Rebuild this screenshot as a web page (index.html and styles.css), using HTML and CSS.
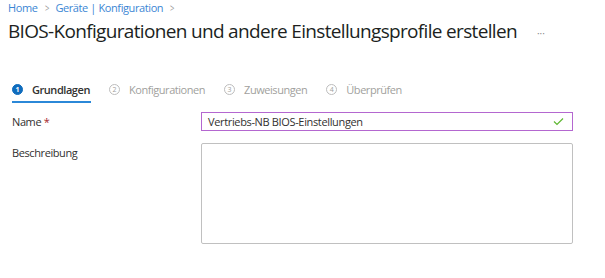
FILE: index.html
```html
<!DOCTYPE html>
<html lang="de">
<head>
<meta charset="utf-8">
<link rel="stylesheet" href="styles.css">
</head>
<body>
<div class="page">
  <nav class="crumbs">
    <a class="crumb">Home</a>
    <span class="sep">&gt;</span>
    <a class="crumb">Geräte | Konfiguration</a>
    <span class="sep">&gt;</span>
  </nav>
  <header class="head">
    <h1 class="title">BIOS-Konfigurationen und andere Einstellungsprofile erstellen</h1>
    <span class="more">···</span>
  </header>
  <ol class="steps">
    <li class="step active"><span class="num">1</span><span class="label">Grundlagen</span></li>
    <li class="step"><span class="num">2</span><span class="label">Konfigurationen</span></li>
    <li class="step"><span class="num">3</span><span class="label">Zuweisungen</span></li>
    <li class="step"><span class="num">4</span><span class="label">Überprüfen</span></li>
  </ol>
  <form class="form">
    <div class="row">
      <label class="lbl">Name <span class="req">*</span></label>
      <div class="field">
        <span class="value">Vertriebs-NB BIOS-Einstellungen</span>
        <svg class="check" width="11" height="9" viewBox="0 0 11 9"><path d="M1 4.5 L4 7.5 L10 1.5" fill="none" stroke="#5fb832" stroke-width="1.2"/></svg>
      </div>
    </div>
    <div class="row">
      <label class="lbl">Beschreibung</label>
      <div class="area"></div>
    </div>
  </form>
</div>
</body>
</html>
```
FILE: styles.css
```css
* { box-sizing: border-box; }
html, body { margin: 0; padding: 0; background: #fff; }
body { font-family: "Open Sans", "Noto Sans", sans-serif; color: #323130; }
.page { padding: 0 0 0 8px; }
.crumbs { display: flex; align-items: center; gap: 6px; height: 14px; font-size: 11px; letter-spacing: -0.4px; color: #3b86d4; }
.crumb { color: #3b86d4; }
.sep { color: #9a9a9a; font-size: 11px; transform: scaleX(0.7); }
.head { display: flex; align-items: center; margin-top: 5px; height: 24px; }
.title { margin: 0; font-size: 19px; font-weight: 400; color: #201f1e; letter-spacing: -0.67px; }
.more { margin-left: 20px; color: #8a8a8a; font-size: 10px; letter-spacing: 0; padding-top: 4px; }
.steps { list-style: none; margin: 36px 0 0 4px; padding: 0; display: flex; gap: 19px; font-size: 11px; letter-spacing: -0.45px; color: #a19f9d; }
.step { display: flex; align-items: center; gap: 9px; height: 20px; position: relative; }
.num { width: 11px; height: 11px; border: 1px solid #bdbdbd; border-radius: 50%; font-size: 7px; letter-spacing: 0; display: flex; align-items: center; justify-content: center; color: #a19f9d; }
.step.active { color: #323130; font-weight: 600; }
.step.active .num { background: #0f6cbd; border-color: #0f6cbd; color: #fff; font-weight: 700; }
.step.active::after { content: ""; position: absolute; left: 0; right: -1px; bottom: -4px; height: 2px; background: #2b88d8; }
.form { margin-top: 13px; display: flex; flex-direction: column; gap: 12px; padding-left: 4px; }
.row { display: flex; align-items: flex-start; }
.lbl { width: 189px; font-size: 11px; letter-spacing: -0.4px; color: #323130; padding-top: 2px; }
.req { color: #a4262c; }
.field { width: 372px; height: 19px; border: 1px solid #b467d0; display: flex; align-items: center; justify-content: space-between; padding: 0 8px 0 6px; font-size: 11px; letter-spacing: -0.35px; color: #323130; }
.area { width: 372px; height: 101px; border: 1px solid #c0c0c0; border-radius: 2px; }
```
